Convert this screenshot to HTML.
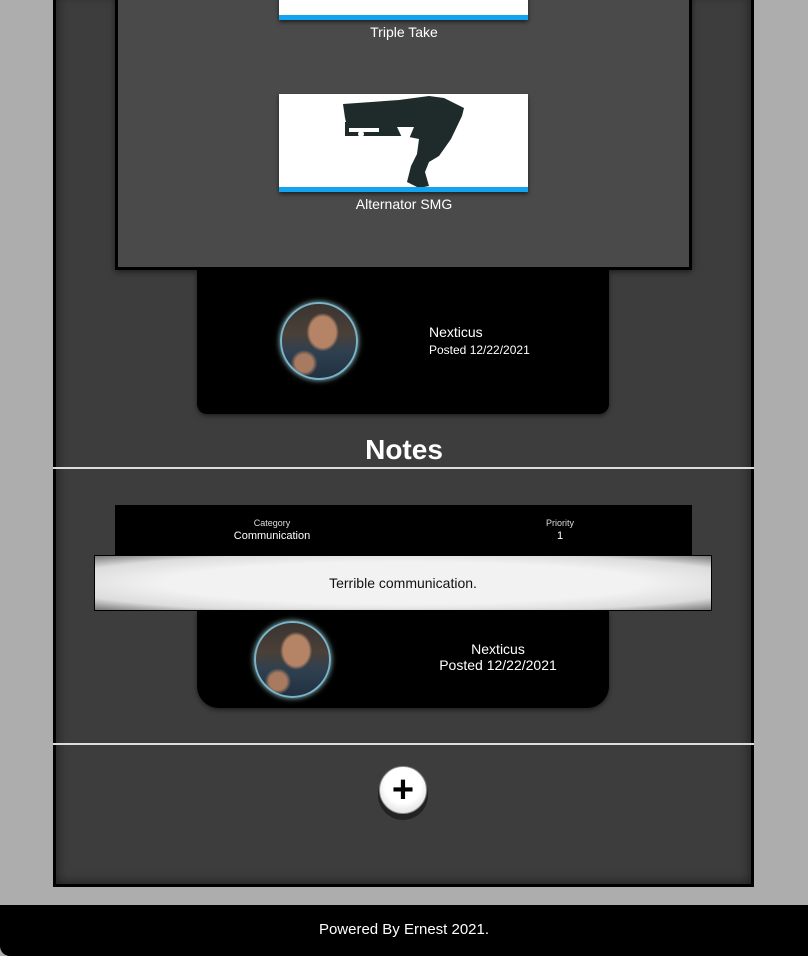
<!DOCTYPE html>
<html><head><style>
*{margin:0;padding:0;box-sizing:border-box}
body{width:808px;height:956px;background:#adadad;font-family:"Liberation Sans",sans-serif;position:relative;overflow:hidden;color:#fff}
.abs{position:absolute}
.cont{left:53px;top:-10px;width:701px;height:897px;background:#3d3d3d;border:3px solid #000;box-shadow:inset 0 0 12px rgba(0,0,0,.6)}
.inner{left:115px;top:-10px;width:577px;height:280px;background:#4a4a4a;border:3px solid #000;box-shadow:0 2px 6px rgba(0,0,0,.5)}
.wimg{left:279px;width:249px;background:#fff;border-bottom:5px solid #12a4ef;box-shadow:0 2px 4px rgba(0,0,0,.6)}
.cap{width:808px;text-align:center;font-size:14px}
.card{left:197px;width:412px;background:#000;box-shadow:0 2px 5px rgba(0,0,0,.5)}
.av{border-radius:50%;border:2px solid #7ab3cc;box-shadow:0 0 6px #9cc;background:radial-gradient(ellipse 22% 26% at 55% 38%,#b58466 0 80%,transparent 100%),radial-gradient(ellipse 30% 30% at 30% 80%,#a87a60 0 40%,transparent 60%),linear-gradient(180deg,#3a3430 0%,#4a4038 40%,#2e4050 65%,#223040 100%)}
.hr{left:53px;width:701px;height:2px;background:#ddd}
</style></head><body>
<div class="abs cont"></div>
<div class="abs inner"></div>
<div class="abs wimg" style="top:-10px;height:30px"></div>
<div class="abs cap" style="top:24px">Triple Take</div>
<div class="abs wimg" style="top:94px;height:98px">
<svg width="249" height="93" viewBox="0 0 249 93"><g fill="#1f2b2b"><path d="M64 10 L120 6 L150 2 L165 4 L185 14 L183 22 L172 45 L160 62 L150 68 L146 78 L150 92 L140 94 L128 88 L132 72 L138 60 L140 45 L125 42 L100 40 L70 40 L66 24 Z"/><rect x="66" y="28" width="60" height="14"/></g><g fill="#fff"><path d="M118 33 L135 33 L127 52 Z"/><rect x="70" y="34" width="30" height="4"/><circle cx="82" cy="40" r="3"/></g></svg></div>
<div class="abs cap" style="top:196px">Alternator SMG</div>
<div class="abs card" style="top:270px;height:144px;border-radius:0 0 10px 10px"></div>
<div class="abs av" style="left:280px;top:302px;width:78px;height:78px"></div>
<div class="abs" style="left:429px;top:324px;font-size:14px">Nexticus</div>
<div class="abs" style="left:429px;top:343px;font-size:12px">Posted 12/22/2021</div>
<div class="abs cap" style="top:434px;font-size:28px;font-weight:bold">Notes</div>
<div class="abs hr" style="top:467px"></div>
<div class="abs" style="left:115px;top:505px;width:577px;height:52px;background:#000"></div>
<div class="abs" style="left:222px;top:518px;width:100px;text-align:center;font-size:9px;color:#ddd">Category</div>
<div class="abs" style="left:212px;top:530px;width:120px;text-align:center;font-size:11px">Communication</div>
<div class="abs" style="left:510px;top:518px;width:100px;text-align:center;font-size:9px;color:#ddd">Priority</div>
<div class="abs" style="left:510px;top:530px;width:100px;text-align:center;font-size:11px">1</div>
<div class="abs" style="left:94px;top:555px;width:618px;height:56px;border:1px solid #000;background:radial-gradient(ellipse at center,#f2f2f2 55%,#dcdcdc 80%,#777 100%);color:#111;text-align:center;line-height:54px;font-size:14px">Terrible communication.</div>
<div class="abs card" style="top:611px;height:97px;border-radius:0 0 22px 22px"></div>
<div class="abs av" style="left:254px;top:621px;width:77px;height:77px"></div>
<div class="abs" style="left:398px;top:641px;width:200px;text-align:center;font-size:14px">Nexticus<br>Posted 12/22/2021</div>
<div class="abs hr" style="top:743px"></div>
<div class="abs" style="left:378px;top:770px;width:50px;height:50px;border-radius:50%;background:#222"></div>
<div class="abs" style="left:379px;top:766px;width:48px;height:48px;border-radius:50%;border:1px solid #888;background:radial-gradient(circle at 50% 40%,#fff 50%,#ccc 100%);color:#000;font-size:38px;font-weight:bold;text-align:center;line-height:46px">+</div>
<div class="abs" style="left:0;top:905px;width:808px;height:51px;background:#000;border-radius:0 0 0 10px;text-align:center;line-height:50px;font-size:15px">Powered By Ernest 2021.</div>
</body></html>
